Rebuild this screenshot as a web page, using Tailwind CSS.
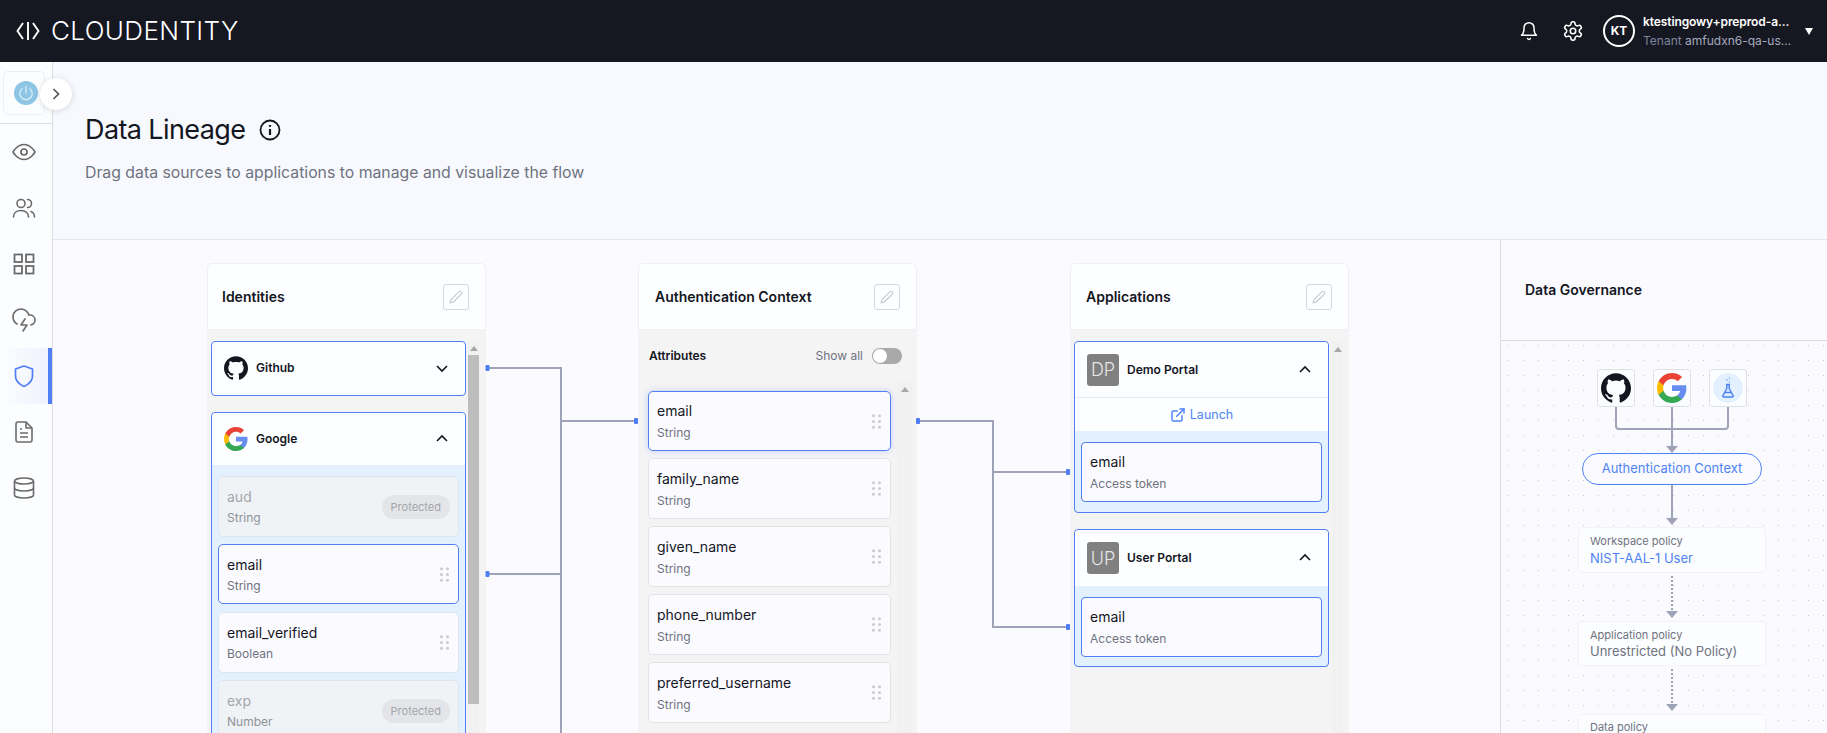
<!DOCTYPE html>
<html lang="en">
<head>
    <meta charset="UTF-8">
    <title>Data Lineage</title>
    <script src="https://cdn.jsdelivr.net/npm/@tailwindcss/browser@4"></script>
</head>
<body class="font-[Inter,sans-serif] text-[#14161f]">
<div class="relative flex h-[733px] w-full flex-col overflow-hidden bg-[#fbfbff]">

    <!-- Top bar -->
    <header class="flex h-[62px] shrink-0 items-center bg-[#151721] pl-[16px] text-white">
        <svg class="h-[20px] w-[24px]" viewBox="0 0 24 20" fill="none" stroke="#fff" stroke-width="1.9">
            <path d="M7 2 1.500 10 7 18"/>
            <path d="M12 1v18"/>
            <path d="M17 2l5.500 8L17 18"/>
        </svg>
        <span class="ml-[11px] text-[26px] leading-none font-light tracking-[0.4px]">CLOUDENTITY</span>
        <div class="ml-auto flex items-center">
            <svg class="h-[20px] w-[20px]" viewBox="0 0 24 24" fill="none" stroke="#fff" stroke-width="1.8" stroke-linecap="round" stroke-linejoin="round">
                <path d="M6 8a6 6 0 0 1 12 0c0 7 3 9 3 9H3s3-2 3-9"/>
                <path d="M10.300 21a1.900 1.900 0 0 0 3.400 0"/>
            </svg>
            <svg class="ml-[23px] h-[22px] w-[22px]" viewBox="0 0 24 24" fill="none" stroke="#fff" stroke-width="1.7" stroke-linecap="round" stroke-linejoin="round">
                <path d="M12.220 2h-.44a2 2 0 0 0-2 2v.18a2 2 0 0 1-1 1.730l-.43.25a2 2 0 0 1-2 0l-.15-.08a2 2 0 0 0-2.730.73l-.22.38a2 2 0 0 0 .73 2.730l.15.1a2 2 0 0 1 1 1.720v.51a2 2 0 0 1-1 1.740l-.15.09a2 2 0 0 0-.73 2.730l.22.38a2 2 0 0 0 2.730.73l.15-.08a2 2 0 0 1 2 0l.43.25a2 2 0 0 1 1 1.730V20a2 2 0 0 0 2 2h.44a2 2 0 0 0 2-2v-.18a2 2 0 0 1 1-1.730l.43-.25a2 2 0 0 1 2 0l.15.08a2 2 0 0 0 2.730-.73l.22-.39a2 2 0 0 0-.73-2.730l-.15-.08a2 2 0 0 1-1-1.740v-.5a2 2 0 0 1 1-1.740l.15-.09a2 2 0 0 0 .73-2.730l-.22-.38a2 2 0 0 0-2.730-.73l-.15.08a2 2 0 0 1-2 0l-.43-.25a2 2 0 0 1-1-1.730V4a2 2 0 0 0-2-2z"/>
                <circle cx="12" cy="12" r="3"/>
            </svg>
            <div class="ml-[19px] flex h-[32px] w-[32px] items-center justify-center rounded-full border-2 border-white text-[12px] font-bold">KT</div>
            <div class="ml-[8px] w-[151px]">
                <div class="whitespace-nowrap text-[12px] leading-[16px] font-semibold tracking-[-0.1px]">ktestingowy+preprod-a...</div>
                <div class="mt-[3px] truncate text-[12px] leading-[16px] text-[#a6aabd]"><span class="text-[#7f849c]">Tenant</span> amfudxn6-qa-us...</div>
            </div>
            <svg class="mr-[14px] ml-[11px] h-[7px] w-[8px]" viewBox="0 0 8 7" fill="#fff"><path d="M0 0h8L4 7z"/></svg>
        </div>
    </header>

    <div class="flex min-h-0 flex-1">
        <!-- Side navigation -->
        <aside class="relative z-10 w-[53px] shrink-0 border-r border-[#dcdde1] bg-[#fcfdff] text-[#6b6b6b]">
            <div class="h-[62px] border-b border-[#dcdde1] px-[3px] pt-[9px]">
                <div class="flex h-[44px] w-[42px] items-center justify-center rounded-[5px] border border-[#eeeff2] pl-[4px]">
                    <svg class="h-[24px] w-[24px]" viewBox="0 0 24 24">
                        <circle cx="12" cy="12" r="12" fill="#8ec5e4"/>
                        <path d="M12 5.500v6.500M8 7.800a6.200 6.200 0 1 0 8 0" fill="none" stroke="#d8edf7" stroke-width="1.300" stroke-linecap="round"/>
                    </svg>
                </div>
            </div>
            <div class="absolute top-[16px] left-[40px] flex h-[32px] w-[32px] items-center justify-center rounded-full bg-white shadow-[0_1px_6px_rgba(0,0,0,0.14)]">
                <svg class="h-[14px] w-[14px]" viewBox="0 0 14 14" fill="none" stroke="#555" stroke-width="1.700"><path d="M4.500 2l5 5-5 5"/></svg>
            </div>
            <nav>
                <div class="flex h-[56px] items-center justify-center pr-[4px]">
                    <svg class="h-[24px] w-[24px]" viewBox="0 0 24 24" fill="none" stroke="currentColor" stroke-width="1.700" stroke-linejoin="round"><path d="M1 12s4-7.500 11-7.500S23 12 23 12s-4 7.500-11 7.500S1 12 1 12z"/><circle cx="12" cy="12" r="3"/></svg>
                </div>
                <div class="flex h-[56px] items-center justify-center pr-[4px]">
                    <svg class="h-[24px] w-[24px]" viewBox="0 0 24 24" fill="none" stroke="currentColor" stroke-width="1.600" stroke-linecap="round"><circle cx="9" cy="7.500" r="4"/><path d="M1.500 21c0-4 3-6.500 7.500-6.500s7.500 2.500 7.500 6.500"/><path d="M22.500 21c0-2.500-1.200-4.500-3.500-5.500"/><path d="M15.500 3.500a4 4 0 0 1 0 8"/></svg>
                </div>
                <div class="flex h-[56px] items-center justify-center pr-[4px]">
                    <svg class="h-[22px] w-[22px]" viewBox="0 0 22 22" fill="none" stroke="currentColor" stroke-width="1.800"><rect x="1.500" y="1.500" width="7.500" height="7.500"/><rect x="13" y="1.500" width="7.500" height="7.500"/><rect x="1.500" y="13" width="7.500" height="7.500"/><rect x="13" y="13" width="7.500" height="7.500"/></svg>
                </div>
                <div class="flex h-[56px] items-center justify-center pr-[4px]">
                    <svg class="h-[24px] w-[24px]" viewBox="0 0 24 24" fill="none" stroke="currentColor" stroke-width="1.600" stroke-linecap="round" stroke-linejoin="round"><path d="M19 16.900A5 5 0 0 0 18 7h-1.260a8 8 0 1 0-11.620 9"/><path d="M13 11l-4 6h6l-4 6"/></svg>
                </div>
                <div class="flex h-[56px] items-center justify-center border-r-4 border-[#4f7ef5] bg-gradient-to-r from-[#fcfdff] to-[#f0f3fe]">
                    <svg class="h-[24px] w-[24px]" viewBox="0 0 24 24" fill="none" stroke="#4f7ef5" stroke-width="1.700" stroke-linejoin="round"><path d="M12 22.500s8.500-3.500 8.500-10.500V5L12 2 3.500 5v7c0 7 8.500 10.500 8.500 10.500z"/></svg>
                </div>
                <div class="flex h-[56px] items-center justify-center pr-[4px]">
                    <svg class="h-[24px] w-[24px]" viewBox="0 0 24 24" fill="none" stroke="currentColor" stroke-width="1.600" stroke-linejoin="round"><path d="M14 2H6a2 2 0 0 0-2 2v16a2 2 0 0 0 2 2h12a2 2 0 0 0 2-2V8z"/><path d="M14 2v6h6"/><path d="M8 13h8M8 17h8M8 9h2"/></svg>
                </div>
                <div class="flex h-[56px] items-center justify-center pr-[4px]">
                    <svg class="h-[24px] w-[24px]" viewBox="0 0 24 24" fill="none" stroke="currentColor" stroke-width="1.600"><ellipse cx="12" cy="5" rx="9.500" ry="3"/><path d="M2.500 5v14c0 1.660 4.200 3 9.500 3s9.500-1.340 9.500-3V5"/><path d="M2.500 12c0 1.660 4.200 3 9.500 3s9.500-1.340 9.500-3"/></svg>
                </div>
            </nav>
        </aside>

        <main class="flex min-w-0 flex-1 flex-col">
            <!-- Page title -->
            <section class="h-[178px] shrink-0 border-b border-[#e4e6eb] bg-[#f7f9fe] pt-[50px] pl-[32px]">
                <div class="flex items-center">
                    <h1 class="text-[27px] leading-[36px] font-normal tracking-[-0.6px]">Data Lineage</h1>
                    <svg class="ml-[14px] h-[22px] w-[22px]" viewBox="0 0 22 22" fill="none" stroke="#14161f" stroke-width="1.800"><circle cx="11" cy="11" r="9.500"/><path d="M11 10v6" stroke-width="2.200"/><path d="M11 6v1.800" stroke-width="2.200"/></svg>
                </div>
                <p class="mt-[13px] text-[15.800px] leading-[24px] text-[#6f7380]">Drag data sources to applications to manage and visualize the flow</p>
            </section>

            <div class="flex min-h-0 flex-1">
                <!-- Lineage columns -->
                <div class="flex min-w-0 flex-1 gap-[152px] pt-[23px] pl-[154px]">

                    <!-- Identities -->
                    <div class="flex w-[279px] shrink-0 flex-col">
                        <div class="flex h-[67px] shrink-0 items-center justify-between rounded-t-[5px] border border-[#eff0f3] bg-[#fcfeff] pr-[16px] pl-[14px]">
                            <h2 class="text-[14px] font-semibold">Identities</h2>
                            <div class="flex h-[26px] w-[26px] items-center justify-center rounded-[3px] border border-[#d6d7da]">
                                <svg class="h-[14px] w-[14px]" viewBox="0 0 24 24" fill="none" stroke="#c2c3c9" stroke-width="1.800"><path d="M17 3a2.800 2.800 0 0 1 4 4L7.500 20.500 2 22l1.500-5.500z"/></svg>
                            </div>
                        </div>
                        <div class="flex min-h-0 flex-1 bg-[#f4f4f5] pt-[11px] pl-[4px]">
                            <div class="w-[255px] shrink-0">
                                <div class="flex h-[55px] items-center rounded-[4px] border border-[#4f7ef5] bg-[#fcfeff] pr-[17px] pb-[1px] pl-[12px]">
                                    <svg class="h-[24px] w-[24px]" viewBox="0 0 24 24" fill="#14161f"><path d="M12 .297c-6.630 0-12 5.373-12 12 0 5.303 3.438 9.800 8.205 11.385.6.113.82-.258.82-.577 0-.285-.01-1.040-.015-2.040-3.338.724-4.042-1.610-4.042-1.610C4.422 18.070 3.633 17.700 3.633 17.700c-1.087-.744.084-.729.084-.729 1.205.084 1.838 1.236 1.838 1.236 1.070 1.835 2.809 1.305 3.495.998.108-.776.417-1.305.760-1.605-2.665-.3-5.466-1.332-5.466-5.930 0-1.310.465-2.380 1.235-3.220-.135-.303-.54-1.523.105-3.176 0 0 1.005-.322 3.300 1.230.96-.267 1.980-.399 3-.405 1.020.006 2.040.138 3 .405 2.280-1.552 3.285-1.230 3.285-1.230.645 1.653.24 2.873.12 3.176.765.84 1.230 1.910 1.230 3.220 0 4.610-2.805 5.625-5.475 5.920.42.36.81 1.096.81 2.220 0 1.606-.015 2.896-.015 3.286 0 .315.21.69.825.57C20.565 22.092 24 17.592 24 12.297c0-6.627-5.373-12-12-12"/></svg>
                                    <span class="ml-[8px] text-[12px] font-semibold">Github</span>
                                    <svg class="ml-auto h-[12px] w-[12px]" viewBox="0 0 12 12" fill="none" stroke="#14161f" stroke-width="1.600"><path d="M1 4l5 5 5-5"/></svg>
                                </div>
                                <div class="mt-[16px] rounded-[4px] border border-[#4f7ef5] bg-[#e3f0fd]">
                                    <div class="flex h-[52px] items-center rounded-t-[4px] bg-[#fcfeff] pr-[17px] pl-[12px]">
                                        <svg class="h-[24px] w-[24px]" viewBox="1 1 22 22"><path fill="#6a8df0" d="M22.560 12.250c0-.78-.07-1.530-.2-2.250H12v4.260h5.920c-.26 1.370-1.040 2.530-2.210 3.310v2.770h3.570c2.080-1.920 3.280-4.740 3.280-8.090z"/><path fill="#34A853" d="M12 23c2.970 0 5.460-.98 7.280-2.660l-3.570-2.770c-.98.66-2.230 1.060-3.710 1.060-2.860 0-5.290-1.930-6.160-4.530H2.180v2.840C3.990 20.530 7.700 23 12 23z"/><path fill="#FBBC05" d="M5.840 14.090c-.22-.66-.35-1.360-.35-2.090s.13-1.430.35-2.090V7.070H2.180C1.430 8.550 1 10.220 1 12s.43 3.450 1.180 4.930l2.850-2.220.81-.62z"/><path fill="#EA4335" d="M12 5.380c1.620 0 3.060.56 4.210 1.640l3.150-3.150C17.450 2.090 14.970 1 12 1 7.700 1 3.990 3.470 2.180 7.070l3.660 2.840c.87-2.600 3.300-4.530 6.160-4.530z"/></svg>
                                        <span class="ml-[8px] text-[12px] font-semibold">Google</span>
                                        <svg class="ml-auto h-[12px] w-[12px]" viewBox="0 0 12 12" fill="none" stroke="#14161f" stroke-width="1.600"><path d="M1 8l5-5 5 5"/></svg>
                                    </div>
                                    <div class="flex flex-col gap-[7px] px-[6px] pt-[11px] pb-[10px]">
                                        <div class="flex h-[61px] items-center justify-between rounded-[5px] border border-[#dde5ef] bg-[#f0f3f6] pr-[8px] pl-[8px]">
                                            <div class="text-[#a3a6ab]">
                                                <div class="text-[14px] leading-[20px]">aud</div>
                                                <div class="mt-[3px] text-[12px] leading-[16px] text-[#8f929a]">String</div>
                                            </div>
                                            <span class="rounded-full bg-[#e3e5e8] px-[9px] py-[4px] text-[11px] leading-[16px] text-[#a3a6ab]">Protected</span>
                                        </div>
                                        <div class="flex h-[60px] items-center justify-between rounded-[5px] border border-[#4f7ef5] bg-[#fbfbff] pr-[9px] pl-[8px]">
                                            <div>
                                                <div class="text-[14px] leading-[20px]">email</div>
                                                <div class="mt-[3px] text-[12px] leading-[16px] text-[#6f7380]">String</div>
                                            </div>
                                            <svg class="h-[15px] w-[9px]" viewBox="0 0 9 15" fill="#c9cbd1"><circle cx="1.500" cy="1.700" r="1.500"/><circle cx="7.500" cy="1.700" r="1.500"/><circle cx="1.500" cy="7.500" r="1.500"/><circle cx="7.500" cy="7.500" r="1.500"/><circle cx="1.500" cy="13.300" r="1.500"/><circle cx="7.500" cy="13.300" r="1.500"/></svg>
                                        </div>
                                        <div class="mt-[1px] flex h-[61px] items-center justify-between rounded-[5px] border border-[#dde5ef] bg-[#fbfbff] pr-[9px] pl-[8px]">
                                            <div>
                                                <div class="text-[14px] leading-[20px]">email_verified</div>
                                                <div class="mt-[3px] text-[12px] leading-[16px] text-[#6f7380]">Boolean</div>
                                            </div>
                                            <svg class="h-[15px] w-[9px]" viewBox="0 0 9 15" fill="#c9cbd1"><circle cx="1.500" cy="1.700" r="1.500"/><circle cx="7.500" cy="1.700" r="1.500"/><circle cx="1.500" cy="7.500" r="1.500"/><circle cx="7.500" cy="7.500" r="1.500"/><circle cx="1.500" cy="13.300" r="1.500"/><circle cx="7.500" cy="13.300" r="1.500"/></svg>
                                        </div>
                                        <div class="flex h-[61px] items-center justify-between rounded-[5px] border border-[#dde5ef] bg-[#f0f3f6] pr-[8px] pl-[8px]">
                                            <div class="text-[#a3a6ab]">
                                                <div class="text-[14px] leading-[20px]">exp</div>
                                                <div class="mt-[3px] text-[12px] leading-[16px] text-[#8f929a]">Number</div>
                                            </div>
                                            <span class="rounded-full bg-[#e3e5e8] px-[9px] py-[4px] text-[11px] leading-[16px] text-[#a3a6ab]">Protected</span>
                                        </div>
                                    </div>
                                </div>
                            </div>
                            <div class="ml-[2px] flex w-[11px] flex-col items-center bg-[#f1f1f1]">
                                <svg class="mt-[5px] mb-[4px] h-[5px] w-[8px]" viewBox="0 0 8 5" fill="#a8a8a8"><path d="M4 0l4 5H0z"/></svg>
                                <div class="h-[349px] w-full bg-[#bdbdbd]"></div>
                            </div>
                        </div>
                    </div>

                    <!-- Authentication Context -->
                    <div class="flex w-[279px] shrink-0 flex-col">
                        <div class="flex h-[67px] shrink-0 items-center justify-between rounded-t-[5px] border border-[#eff0f3] bg-[#fcfeff] pr-[16px] pl-[16px]">
                            <h2 class="text-[14px] font-semibold">Authentication Context</h2>
                            <div class="flex h-[26px] w-[26px] items-center justify-center rounded-[3px] border border-[#d6d7da]">
                                <svg class="h-[14px] w-[14px]" viewBox="0 0 24 24" fill="none" stroke="#c2c3c9" stroke-width="1.800"><path d="M17 3a2.800 2.800 0 0 1 4 4L7.500 20.500 2 22l1.500-5.500z"/></svg>
                            </div>
                        </div>
                        <div class="min-h-0 flex-1 bg-[#f4f4f5]">
                            <div class="flex h-[51px] items-center pr-[15px] pl-[11px]">
                                <span class="text-[12px] font-semibold">Attributes</span>
                                <span class="ml-auto text-[12px] text-[#6f7380]">Show all</span>
                                <div class="ml-[9px] h-[16px] w-[30px] rounded-full bg-[#a9a9a9] p-[1px]">
                                    <div class="h-[14px] w-[14px] rounded-full bg-white"></div>
                                </div>
                            </div>
                            <div class="flex pl-[10px]">
                                <div class="flex w-[243px] shrink-0 flex-col gap-[7px] pt-[10px]">
                                    <div class="flex h-[60px] items-center justify-between rounded-[5px] border border-[#4f7ef5] bg-[#fbfbff] pr-[9px] pl-[8px] shadow-[0_0_6px_rgba(79,126,245,0.3)]">
                                        <div class="pb-[1px]">
                                            <div class="text-[14px] leading-[20px]">email</div>
                                            <div class="mt-[4px] text-[12px] leading-[16px] text-[#6f7380]">String</div>
                                        </div>
                                        <svg class="h-[15px] w-[9px]" viewBox="0 0 9 15" fill="#c9cbd1"><circle cx="1.500" cy="1.700" r="1.500"/><circle cx="7.500" cy="1.700" r="1.500"/><circle cx="1.500" cy="7.500" r="1.500"/><circle cx="7.500" cy="7.500" r="1.500"/><circle cx="1.500" cy="13.300" r="1.500"/><circle cx="7.500" cy="13.300" r="1.500"/></svg>
                                    </div>
                                    <div class="flex h-[61px] items-center justify-between rounded-[5px] border border-[#e2e3e7] bg-[#fbfbff] pr-[9px] pl-[8px]">
                                        <div>
                                            <div class="text-[14px] leading-[20px]">family_name</div>
                                            <div class="mt-[4px] text-[12px] leading-[16px] text-[#6f7380]">String</div>
                                        </div>
                                        <svg class="h-[15px] w-[9px]" viewBox="0 0 9 15" fill="#c9cbd1"><circle cx="1.500" cy="1.700" r="1.500"/><circle cx="7.500" cy="1.700" r="1.500"/><circle cx="1.500" cy="7.500" r="1.500"/><circle cx="7.500" cy="7.500" r="1.500"/><circle cx="1.500" cy="13.300" r="1.500"/><circle cx="7.500" cy="13.300" r="1.500"/></svg>
                                    </div>
                                    <div class="flex h-[61px] items-center justify-between rounded-[5px] border border-[#e2e3e7] bg-[#fbfbff] pr-[9px] pl-[8px]">
                                        <div>
                                            <div class="text-[14px] leading-[20px]">given_name</div>
                                            <div class="mt-[4px] text-[12px] leading-[16px] text-[#6f7380]">String</div>
                                        </div>
                                        <svg class="h-[15px] w-[9px]" viewBox="0 0 9 15" fill="#c9cbd1"><circle cx="1.500" cy="1.700" r="1.500"/><circle cx="7.500" cy="1.700" r="1.500"/><circle cx="1.500" cy="7.500" r="1.500"/><circle cx="7.500" cy="7.500" r="1.500"/><circle cx="1.500" cy="13.300" r="1.500"/><circle cx="7.500" cy="13.300" r="1.500"/></svg>
                                    </div>
                                    <div class="flex h-[61px] items-center justify-between rounded-[5px] border border-[#e2e3e7] bg-[#fbfbff] pr-[9px] pl-[8px]">
                                        <div>
                                            <div class="text-[14px] leading-[20px]">phone_number</div>
                                            <div class="mt-[4px] text-[12px] leading-[16px] text-[#6f7380]">String</div>
                                        </div>
                                        <svg class="h-[15px] w-[9px]" viewBox="0 0 9 15" fill="#c9cbd1"><circle cx="1.500" cy="1.700" r="1.500"/><circle cx="7.500" cy="1.700" r="1.500"/><circle cx="1.500" cy="7.500" r="1.500"/><circle cx="7.500" cy="7.500" r="1.500"/><circle cx="1.500" cy="13.300" r="1.500"/><circle cx="7.500" cy="13.300" r="1.500"/></svg>
                                    </div>
                                    <div class="flex h-[61px] items-center justify-between rounded-[5px] border border-[#e2e3e7] bg-[#fbfbff] pr-[9px] pl-[8px]">
                                        <div>
                                            <div class="text-[14px] leading-[20px]">preferred_username</div>
                                            <div class="mt-[4px] text-[12px] leading-[16px] text-[#6f7380]">String</div>
                                        </div>
                                        <svg class="h-[15px] w-[9px]" viewBox="0 0 9 15" fill="#c9cbd1"><circle cx="1.500" cy="1.700" r="1.500"/><circle cx="7.500" cy="1.700" r="1.500"/><circle cx="1.500" cy="7.500" r="1.500"/><circle cx="7.500" cy="7.500" r="1.500"/><circle cx="1.500" cy="13.300" r="1.500"/><circle cx="7.500" cy="13.300" r="1.500"/></svg>
                                    </div>
                                </div>
                                <div class="ml-[6px] flex h-[400px] w-[15px] justify-center rounded-t-[3px] bg-[#f1f1f1]">
                                    <svg class="mt-[6px] h-[5px] w-[8px]" viewBox="0 0 8 5" fill="#a8a8a8"><path d="M4 0l4 5H0z"/></svg>
                                </div>
                            </div>
                        </div>
                    </div>

                    <!-- Applications -->
                    <div class="ml-[1px] flex w-[279px] shrink-0 flex-col">
                        <div class="flex h-[67px] shrink-0 items-center justify-between rounded-t-[5px] border border-[#eff0f3] bg-[#fcfeff] pr-[16px] pl-[15px]">
                            <h2 class="text-[14px] font-semibold">Applications</h2>
                            <div class="flex h-[26px] w-[26px] items-center justify-center rounded-[3px] border border-[#d6d7da]">
                                <svg class="h-[14px] w-[14px]" viewBox="0 0 24 24" fill="none" stroke="#c2c3c9" stroke-width="1.800"><path d="M17 3a2.800 2.800 0 0 1 4 4L7.500 20.500 2 22l1.500-5.500z"/></svg>
                            </div>
                        </div>
                        <div class="flex min-h-0 flex-1 bg-[#f4f4f5] pt-[11px] pl-[4px]">
                            <div class="w-[255px] shrink-0">
                                <div class="rounded-[4px] border border-[#4f7ef5] bg-[#e3f0fd]">
                                    <div class="flex h-[56px] items-center rounded-t-[4px] border-b border-[#e8eaee] bg-[#fcfeff] pr-[17px] pl-[12px]">
                                        <div class="flex h-[32px] w-[32px] items-center justify-center rounded-[3px] bg-[#808080] text-[18px] font-light text-[#e6e6e6]">DP</div>
                                        <span class="ml-[8px] text-[12px] font-semibold">Demo Portal</span>
                                        <svg class="ml-auto h-[12px] w-[12px]" viewBox="0 0 12 12" fill="none" stroke="#14161f" stroke-width="1.600"><path d="M1 8l5-5 5 5"/></svg>
                                    </div>
                                    <div class="flex h-[33px] items-center justify-center bg-[#fcfeff] pt-[1px] text-[12.500px] text-[#4f83f5]">
                                        <svg class="h-[16px] w-[16px]" viewBox="0 0 24 24" fill="none" stroke="#4f83f5" stroke-width="2.200" stroke-linecap="round"><path d="M18 13v6a2 2 0 0 1-2 2H5a2 2 0 0 1-2-2V8a2 2 0 0 1 2-2h6"/><path d="M15 3h6v6"/><path d="M10 14L21 3"/></svg>
                                        <span class="ml-[4px]">Launch</span>
                                    </div>
                                    <div class="px-[6px] pt-[11px] pb-[10px]">
                                        <div class="h-[60px] rounded-[4px] border border-[#4f7ef5] bg-[#fbfbff] pt-[9px] pl-[8px]">
                                            <div class="text-[14px] leading-[20px]">email</div>
                                            <div class="mt-[4px] text-[12px] leading-[16px] text-[#6f7380]">Access token</div>
                                        </div>
                                    </div>
                                </div>
                                <div class="mt-[16px] rounded-[4px] border border-[#4f7ef5] bg-[#e3f0fd]">
                                    <div class="flex h-[56px] items-center rounded-t-[4px] bg-[#fcfeff] pr-[17px] pl-[12px]">
                                        <div class="flex h-[32px] w-[32px] items-center justify-center rounded-[3px] bg-[#808080] text-[18px] font-light text-[#e6e6e6]">UP</div>
                                        <span class="ml-[8px] text-[12px] font-semibold">User Portal</span>
                                        <svg class="ml-auto h-[12px] w-[12px]" viewBox="0 0 12 12" fill="none" stroke="#14161f" stroke-width="1.600"><path d="M1 8l5-5 5 5"/></svg>
                                    </div>
                                    <div class="px-[6px] pt-[11px] pb-[9px]">
                                        <div class="h-[60px] rounded-[4px] border border-[#4f7ef5] bg-[#fbfbff] pt-[9px] pl-[8px]">
                                            <div class="text-[14px] leading-[20px]">email</div>
                                            <div class="mt-[4px] text-[12px] leading-[16px] text-[#6f7380]">Access token</div>
                                        </div>
                                    </div>
                                </div>
                            </div>
                            <div class="ml-[3px] flex h-[400px] w-[11px] justify-center bg-[#f1f1f1]">
                                <svg class="mt-[6px] h-[5px] w-[8px]" viewBox="0 0 8 5" fill="#a8a8a8"><path d="M4 0l4 5H0z"/></svg>
                            </div>
                        </div>
                    </div>
                </div>

                <!-- Data Governance -->
                <aside class="flex w-[327px] shrink-0 flex-col border-l border-[#dcdde1]">
                    <div class="flex h-[101px] shrink-0 items-center border-b border-[#dcdde1] pb-[2px] pl-[24px]">
                        <h2 class="text-[14px] font-semibold">Data Governance</h2>
                    </div>
                    <div class="flex min-h-0 flex-1 flex-col items-center bg-[radial-gradient(#c4c7d0_0.7px,transparent_0.8px)] bg-[size:15px_15px] bg-[position:0px_-3px] pt-[28px] pl-[16px]">
                        <div class="flex gap-[18px]">
                            <div class="flex h-[38px] w-[38px] items-center justify-center rounded-[3px] border border-[#dfe0e4] bg-[#fcfdff]">
                                <svg class="h-[30px] w-[30px]" viewBox="0 0 24 24" fill="#14161f"><path d="M12 .297c-6.630 0-12 5.373-12 12 0 5.303 3.438 9.800 8.205 11.385.6.113.82-.258.82-.577 0-.285-.01-1.040-.015-2.040-3.338.724-4.042-1.610-4.042-1.610C4.422 18.070 3.633 17.700 3.633 17.700c-1.087-.744.084-.729.084-.729 1.205.084 1.838 1.236 1.838 1.236 1.070 1.835 2.809 1.305 3.495.998.108-.776.417-1.305.760-1.605-2.665-.3-5.466-1.332-5.466-5.930 0-1.310.465-2.380 1.235-3.220-.135-.303-.54-1.523.105-3.176 0 0 1.005-.322 3.300 1.230.96-.267 1.980-.399 3-.405 1.020.006 2.040.138 3 .405 2.280-1.552 3.285-1.230 3.285-1.230.645 1.653.24 2.873.12 3.176.765.84 1.230 1.910 1.230 3.220 0 4.610-2.805 5.625-5.475 5.920.42.36.81 1.096.81 2.220 0 1.606-.015 2.896-.015 3.286 0 .315.21.69.825.57C20.565 22.092 24 17.592 24 12.297c0-6.627-5.373-12-12-12"/></svg>
                            </div>
                            <div class="flex h-[38px] w-[38px] items-center justify-center rounded-[3px] border border-[#dfe0e4] bg-[#fcfdff]">
                                <svg class="h-[30px] w-[30px]" viewBox="1 1 22 22"><path fill="#6a8df0" d="M22.560 12.250c0-.78-.07-1.530-.2-2.250H12v4.260h5.920c-.26 1.370-1.040 2.530-2.210 3.310v2.770h3.570c2.080-1.920 3.280-4.740 3.280-8.090z"/><path fill="#34A853" d="M12 23c2.970 0 5.460-.98 7.280-2.660l-3.570-2.770c-.98.66-2.230 1.060-3.710 1.060-2.860 0-5.290-1.930-6.160-4.530H2.180v2.840C3.990 20.530 7.700 23 12 23z"/><path fill="#FBBC05" d="M5.840 14.090c-.22-.66-.35-1.360-.35-2.090s.13-1.430.35-2.090V7.070H2.180C1.430 8.550 1 10.220 1 12s.43 3.450 1.180 4.930l2.850-2.220.81-.62z"/><path fill="#EA4335" d="M12 5.380c1.620 0 3.060.56 4.210 1.640l3.150-3.150C17.450 2.090 14.970 1 12 1 7.700 1 3.990 3.470 2.180 7.070l3.660 2.840c.87-2.600 3.300-4.530 6.160-4.530z"/></svg>
                            </div>
                            <div class="flex h-[38px] w-[38px] items-center justify-center rounded-[3px] border border-[#dfe0e4] bg-[#fcfdff]">
                                <svg class="h-[30px] w-[30px]" viewBox="0 0 30 30" fill="none" stroke="#4f83f5" stroke-width="1.500" stroke-linejoin="round">
                                    <circle cx="15" cy="15" r="15" fill="#e3f0fd" stroke="none"/>
                                    <path d="M13 11.500h4M13.800 11.500v4l-3.800 7a1 1 0 0 0 1 1.500h8a1 1 0 0 0 1-1.500l-3.800-7v-4"/>
                                    <path d="M11.800 19.500h6.400"/>
                                    <circle cx="14" cy="7" r=".7" fill="#4f83f5" stroke="none"/><circle cx="16.500" cy="5" r=".6" fill="#4f83f5" stroke="none"/><circle cx="16.500" cy="8.800" r=".6" fill="#4f83f5" stroke="none"/>
                                </svg>
                            </div>
                        </div>
                        <svg class="h-[46px] w-[180px] shrink-0" viewBox="0 0 180 46" fill="none" stroke="#9fa3b8" stroke-width="2">
                            <path d="M34 0v19a3 3 0 0 0 3 3h106a3 3 0 0 0 3-3V0"/>
                            <path d="M90 0v39"/>
                            <path d="M84 39h12l-6 7z" fill="#9fa3b8" stroke="none"/>
                        </svg>
                        <div class="flex h-[32px] w-[180px] shrink-0 items-center justify-center rounded-full border border-[#4f83f5] bg-[#fbfbff] text-[13px] text-[#4f83f5]">Authentication Context</div>
                        <svg class="h-[43px] w-[14px] shrink-0" viewBox="0 0 14 43" fill="none" stroke="#9fa3b8" stroke-width="2">
                            <path d="M7 0v33"/>
                            <path d="M1 33h12l-6 7z" fill="#9fa3b8" stroke="none"/>
                        </svg>
                        <div class="h-[44px] w-[186px] shrink-0 rounded-[3px] bg-[#fbfdff] pt-[6px] pl-[11px] shadow-[0_0_2px_rgba(0,0,0,0.12)]">
                            <div class="text-[11px] leading-[14px] text-[#6f7380]">Workspace policy</div>
                            <div class="mt-[2px] text-[13px] leading-[17px] text-[#4f83f5]">NIST-AAL-1 User</div>
                        </div>
                        <svg class="h-[50px] w-[14px] shrink-0" viewBox="0 0 14 50" fill="none" stroke="#9fa3b8" stroke-width="2">
                            <path d="M7 4v36" stroke-dasharray="2 2"/>
                            <path d="M1 39h12l-6 7z" fill="#9fa3b8" stroke="none"/>
                        </svg>
                        <div class="h-[43px] w-[186px] shrink-0 rounded-[3px] bg-[#fbfdff] pt-[6px] pl-[11px] shadow-[0_0_2px_rgba(0,0,0,0.12)]">
                            <div class="text-[11px] leading-[14px] text-[#6f7380]">Application policy</div>
                            <div class="mt-[1px] text-[13px] leading-[17px] text-[#6f7380]">Unrestricted (No Policy)</div>
                        </div>
                        <svg class="h-[50px] w-[14px] shrink-0" viewBox="0 0 14 50" fill="none" stroke="#9fa3b8" stroke-width="2">
                            <path d="M7 4v36" stroke-dasharray="2 2"/>
                            <path d="M1 39h12l-6 7z" fill="#9fa3b8" stroke="none"/>
                        </svg>
                        <div class="h-[43px] w-[186px] shrink-0 rounded-[3px] bg-[#fbfdff] pt-[6px] pl-[11px] shadow-[0_0_2px_rgba(0,0,0,0.12)]">
                            <div class="text-[11px] leading-[12px] text-[#6f7380]">Data policy</div>
                        </div>
                    </div>
                </aside>
            </div>
        </main>
    </div>

    <!-- Connector lines between the columns -->
    <svg class="pointer-events-none absolute top-0 left-0 h-[733px] w-[1827px]" viewBox="0 0 1827 733" fill="none">
        <g stroke="#9fa3b8" stroke-width="2">
            <path d="M488 368H561V733"/>
            <path d="M488 574H561"/>
            <path d="M561 421H635"/>
            <path d="M918 421H993V627H1068"/>
            <path d="M993 472H1068"/>
        </g>
        <g fill="#4f7ef5">
            <rect x="485.500" y="365" width="4" height="6" rx="1"/>
            <rect x="485.500" y="571" width="4" height="6" rx="1"/>
            <rect x="634" y="418" width="4" height="6" rx="1"/>
            <rect x="916" y="418" width="4" height="6" rx="1"/>
            <rect x="1066" y="469" width="4" height="6" rx="1"/>
            <rect x="1066" y="624" width="4" height="6" rx="1"/>
        </g>
    </svg>
</div>
</body>
</html>
